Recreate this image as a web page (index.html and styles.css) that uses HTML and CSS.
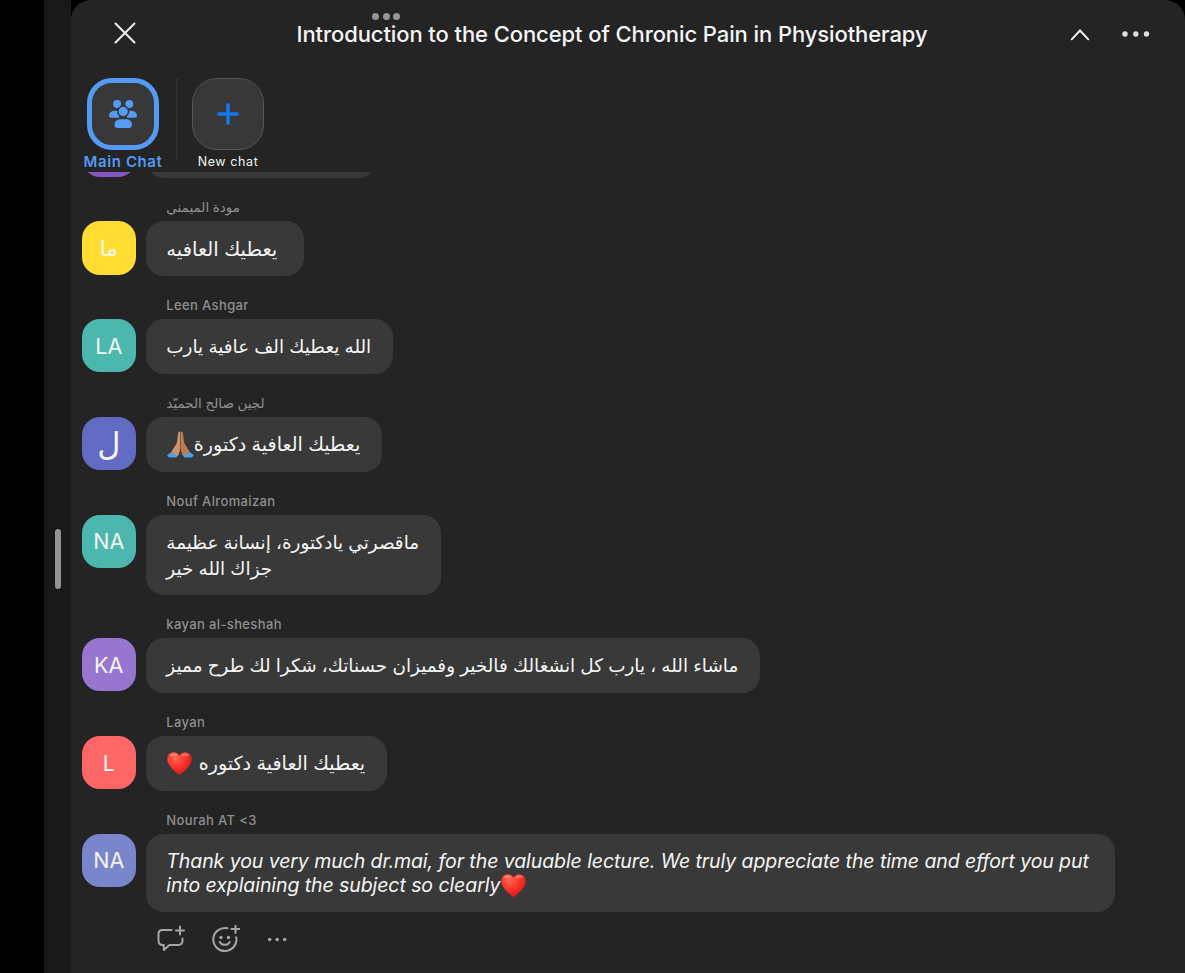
FILE: index.html
```html
<!DOCTYPE html>
<html lang="en">
<head>
  <meta charset="UTF-8">
  <title>Meeting Chat</title>
  <link rel="stylesheet" href="styles.css">
</head>
<body>

  <!-- shared emoji shapes -->
  <svg class="defs" width="0" height="0">
    <defs>
      <radialGradient id="heartFill" cx="0.35" cy="0.25" r="0.8">
        <stop offset="0" stop-color="#ff6a55"/>
        <stop offset="0.5" stop-color="#fb3328"/>
        <stop offset="1" stop-color="#d9141c"/>
      </radialGradient>
      <symbol id="heart" viewBox="0 0 24 24">
        <path fill="url(#heartFill)" d="M12 23.2C9.500 20.800 .3 14.800 .3 7.800C.3 3.800 3.200 1.200 6.500 1.200C9 1.200 11 2.500 12 4.600C13 2.500 15 1.200 17.500 1.200C20.800 1.200 23.700 3.800 23.700 7.800C23.700 14.800 14.500 20.800 12 23.200Z"/>
        <ellipse cx="6.200" cy="3.600" rx="3.400" ry="1.500" fill="#ffb0a0" opacity=".5"/>
        <ellipse cx="17.600" cy="3.600" rx="3.400" ry="1.500" fill="#ffb0a0" opacity=".5"/>
      </symbol>
      <symbol id="pray" viewBox="0 0 26 26">
        <path fill="#4a9fe8" d="M0 23.500L6.500 18L12 22L9 25.500H2Z"/>
        <path fill="#4a9fe8" d="M26 23.500L19.500 18L14 22L17 25.500H24Z"/>
        <path fill="#cf9268" d="M12.800 .5C11.600 .4 10.700 1.300 10.600 2.600L9.500 11.500L4.500 19.500C6 21.500 8 23.200 10 23.800C12 21.500 12.800 19 12.800 16Z"/>
        <path fill="#bd7c54" d="M13.200 .5C14.400 .4 15.300 1.300 15.400 2.600L16.500 11.500L21.500 19.500C20 21.500 18 23.200 16 23.800C14 21.500 13.200 19 13.200 16Z"/>
      </symbol>
    </defs>
  </svg>

  <div class="app">
    <div class="side"></div>
    <div class="divider"><span class="handle"></span></div>

    <main class="panel">
      <div class="grabber"><i></i><i></i><i></i></div>

      <header class="header">
        <svg class="close" width="22" height="22" viewBox="0 0 22 22"><path d="M1.500 1.500L20.500 20.500M20.500 1.500L1.500 20.500"/></svg>
        <h1>Introduction to the Concept of Chronic Pain in Physiotherapy</h1>
        <svg class="collapse" width="20" height="12" viewBox="0 0 20 12"><path d="M1.700 10.300L10 1.500L18.300 10.300"/></svg>
        <svg class="more" width="28" height="6" viewBox="0 0 28 6"><circle cx="3" cy="3" r="2.700"/><circle cx="13.800" cy="3" r="2.700"/><circle cx="24.500" cy="3" r="2.700"/></svg>
      </header>

      <nav class="chats">
        <div class="chat active">
          <div class="tile">
            <svg width="28" height="28" viewBox="0 0 28 28">
              <circle cx="8.100" cy="4" r="4"/>
              <circle cx="20.300" cy="4" r="4"/>
              <path d="M6 10.800H10V17.800H2.500C.8 17.800 0 17 0 15.800C0 12.800 2.600 10.800 6 10.800Z"/>
              <path d="M22 10.800H18V17.800H25.500C27.200 17.800 28 17 28 15.800C28 12.800 25.400 10.800 22 10.800Z"/>
              <circle class="cut" cx="14.200" cy="11.500" r="5.400"/>
              <path d="M12 19.300H16.500C20.500 19.300 23 21.500 23 24.600C23 27 22 28 20 28H8.500C6.500 28 5.500 27 5.500 24.600C5.500 21.500 8 19.300 12 19.300Z"/>
            </svg>
          </div>
          <span>Main Chat</span>
        </div>
        <div class="rule"></div>
        <div class="chat new">
          <div class="tile">
            <svg width="22" height="22" viewBox="0 0 22 22"><path d="M11 .5V21.500M.5 11H21.500"/></svg>
          </div>
          <span>New chat</span>
        </div>
      </nav>

      <section class="messages">
        <div class="message previous">
          <div class="avatar violet"></div>
          <div class="bubble"></div>
        </div>

        <div class="message">
          <div class="name arabic" dir="rtl">مودة الميمني</div>
          <div class="avatar yellow">ما</div>
          <div class="bubble short" dir="rtl">يعطيك العافيه</div>
        </div>

        <div class="message">
          <div class="name">Leen Ashgar</div>
          <div class="avatar teal">LA</div>
          <div class="bubble tight" dir="rtl">الله يعطيك الف عافية يارب</div>
        </div>

        <div class="message">
          <div class="name arabic" dir="rtl">لجين صالح الحميّد</div>
          <div class="avatar indigo big">ل</div>
          <div class="bubble" dir="rtl">يعطيك العافية دكتورة<svg class="emoji pray"><use href="#pray"/></svg></div>
        </div>

        <div class="message">
          <div class="name">Nouf Alromaizan</div>
          <div class="avatar teal">NA</div>
          <div class="bubble tight" dir="rtl">ماقصرتي يادكتورة، إنسانة عظيمة<br>جزاك الله خير</div>
        </div>

        <div class="message">
          <div class="name">kayan al-sheshah</div>
          <div class="avatar purple">KA</div>
          <div class="bubble tight" dir="rtl">ماشاء الله ، يارب كل انشغالك فالخير وفميزان حسناتك، شكرا لك طرح مميز</div>
        </div>

        <div class="message">
          <div class="name">Layan</div>
          <div class="avatar coral">L</div>
          <div class="bubble" dir="rtl">يعطيك العافية دكتوره <svg class="emoji"><use href="#heart"/></svg></div>
        </div>

        <div class="message">
          <div class="name">Nourah AT &lt;3</div>
          <div class="avatar periwinkle">NA</div>
          <div class="bubble english">Thank you very much dr.mai, for the valuable lecture. We truly appreciate the time and effort you put<br>into explaining the subject so clearly<svg class="emoji"><use href="#heart"/></svg></div>
        </div>
      </section>

      <div class="actions">
        <svg width="28" height="28" viewBox="0 0 28 28">
          <path d="M14.500 5H5.500C3 5 1.500 6.500 1.500 9V15.500C1.500 18 3 19.700 5 19.900H6.800V25L12.500 19.900H21.500C24 19.900 25.500 18.300 25.500 15.800V13.500"/>
          <path d="M23 1.500V9.500M19 5.500H27"/>
        </svg>
        <svg width="28" height="28" viewBox="0 0 28 28">
          <path d="M15.500 3.200C8 1.900 1.300 7.200 1.300 14.500C1.300 21 6.500 26 12.800 26C19.500 26 24.500 20.700 24.500 14.500C24.500 13.700 24.400 12.900 24.200 12.200"/>
          <path d="M7.800 16.800C9.500 20.800 16 20.800 17.700 16.800M23.500 0V8M19.500 4H27.500"/>
          <circle class="dot" cx="9" cy="12.500" r="1.700"/><circle class="dot" cx="16.500" cy="12.500" r="1.700"/>
        </svg>
        <svg width="20" height="28" viewBox="0 0 20 28"><circle class="dot" cx="2.700" cy="14.500" r="1.800"/><circle class="dot" cx="10.200" cy="14.500" r="1.800"/><circle class="dot" cx="17.700" cy="14.500" r="1.800"/></svg>
      </div>
    </main>
  </div>

</body>
</html>
```
FILE: styles.css
```css
* {
  box-sizing: border-box;
}

html, body {
  margin: 0;
  height: 100%;
  overflow: hidden;
}

body {
  background-color: #000;
  color: #f5f5f5;
  font-family: Inter, "DejaVu Sans", sans-serif;
}

.defs {
  position: absolute;
}

.app {
  display: flex;
  height: 973px;
}

.side {
  width: 44px;
}

.divider {
  width: 27px;
  background-color: #191919;
  padding: 529px 0 0 11px;
}

.handle {
  display: block;
  width: 6px;
  height: 60px;
  border-radius: 3px;
  background-color: #929297;
}

.panel {
  position: relative;
  flex: 1;
  background-color: #242424;
  border-radius: 20px 20px 0 0;
  overflow: hidden;
}

.grabber {
  position: absolute;
  top: 13px;
  left: 301px;
  display: flex;
  gap: 3.5px;
}

.grabber i {
  width: 7px;
  height: 7px;
  border-radius: 50%;
  background-color: #969696;
}

/* header */
.header {
  display: flex;
  align-items: center;
  height: 68px;
  padding: 0 35px 0 43px;
}

.header svg {
  flex: none;
  fill: none;
  stroke: #f2f2f2;
  stroke-width: 1.9;
  stroke-linecap: round;
}

h1 {
  flex: 1;
  margin: 0 0 0 160.5px;
  font-size: 22px;
  font-weight: 500;
  letter-spacing: -0.09px;
  white-space: nowrap;
}

.header .close {
  margin-bottom: 2px;
}

.header .collapse {
  margin: 2px 32.5px 0 0;
}

.header .more {
  fill: #dedede;
  stroke: none;
}

/* chat switcher */
.chats {
  display: flex;
  height: 103.5px;
  padding: 10px 0 0 13px;
}

.chat {
  display: flex;
  flex-direction: column;
  align-items: center;
  width: 78px;
}

.tile {
  display: flex;
  align-items: center;
  justify-content: center;
  width: 72px;
  height: 72px;
  border: 1px solid #555;
  border-radius: 25px;
  background-color: #383838;
}

.chat span {
  margin-top: 3.5px;
  font-size: 12.5px;
  line-height: 16px;
  letter-spacing: 0.6px;
  white-space: nowrap;
}

.active .tile {
  border: 5px solid #539bf5;
}

.active svg {
  fill: #539bf5;
}

.active .cut {
  stroke: #383838;
  stroke-width: 1.5;
}

.active span {
  font-size: 15px;
  font-weight: 600;
  letter-spacing: 0.6px;
  color: #539bf5;
}

.rule {
  width: 2px;
  height: 83px;
  margin: 0 11px 0 14px;
  background-color: #2e2e2e;
}

.new path {
  stroke: #1677f2;
  stroke-width: 3.5;
}

/* messages */
.messages {
  height: 742px;
  overflow: hidden;
}

.message {
  display: grid;
  grid-template-columns: 53.5px auto;
  column-gap: 10.8px;
  justify-content: start;
  padding-left: 11px;
}

.name {
  grid-column: 2;
  height: 43px;
  padding: 19px 0 0 20px;
  font-size: 13px;
  line-height: 20px;
  letter-spacing: 0.37px;
  font-weight: 500;
  color: #8f8f8f;
  text-align: left;
}

.arabic {
  font-size: 13.5px;
}

.avatar {
  grid-column: 1;
  display: flex;
  align-items: center;
  justify-content: center;
  width: 53.5px;
  height: 53.5px;
  border-radius: 18px;
  font-size: 21.5px;
}

.bubble {
  justify-self: start;
  min-height: 54.9px;
  padding: 15.6px 21.5px 14px 20px;
  border-radius: 18px;
  background-color: #393939;
  font-size: 19.1px;
  line-height: 25.3px;
  text-align: left;
  white-space: nowrap;
}

.short {
  min-width: 158px;
  font-size: 19.5px;
}

.tight {
  font-size: 18.4px;
}

.english {
  padding: 15.2px 26px 14.4px 20px;
  font-size: 19.5px;
  font-style: italic;
  letter-spacing: -0.08px;
  line-height: 24.4px;
}

/* keep the emoji level with the middle of the line */
.emoji {
  width: 25px;
  height: 25px;
  margin: -4px 1px;
  vertical-align: -1.5px;
}

.english .emoji {
  vertical-align: -2px;
}

.pray {
  width: 27px;
  height: 27px;
  margin: -4px 0 -4px 0.5px;
  vertical-align: -3px;
}

.big {
  font-size: 32px;
}

.previous {
  height: 6.5px;
}

.previous .avatar,
.previous .bubble {
  margin-top: -48px;
}

.previous .bubble {
  width: 230px;
}

.violet { background-color: #8455c5; }
.yellow { background-color: #ffdd33; }
.teal { background-color: #4cb7ad; }
.indigo { background-color: #616bc1; }
.purple { background-color: #9676d0; }
.coral { background-color: #ff6666; }
.periwinkle { background-color: #7986cc; }

/* message actions */
.actions {
  display: flex;
  gap: 27px;
  padding: 11.5px 0 0 85.5px;
}

.actions svg {
  fill: none;
  stroke: #a6a6a6;
  stroke-width: 2;
  stroke-linecap: round;
  stroke-linejoin: round;
}

.actions .dot {
  fill: #a6a6a6;
  stroke: none;
}
```
